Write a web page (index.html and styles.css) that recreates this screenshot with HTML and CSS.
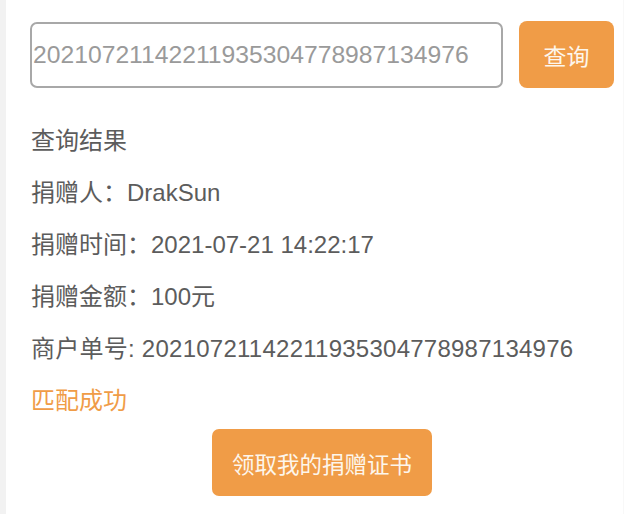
FILE: index.html
```html
<!DOCTYPE html>
<html lang="zh-CN">
<head>
<meta charset="utf-8">
<title>查询结果</title>
<link rel="stylesheet" href="styles.css">
</head>
<body>
<div class="page">
  <div class="strip"></div>
  <main class="content">
    <div class="search-row">
      <input class="search-input" type="text" value="20210721142211935304778987134976" readonly>
      <button class="btn btn-search" type="button">查询</button>
    </div>
    <div class="result">
      <div class="line">查询结果</div>
      <div class="line">捐赠人：DrakSun</div>
      <div class="line">捐赠时间：2021-07-21 14:22:17</div>
      <div class="line">捐赠金额：100元</div>
      <div class="line order">商户单号: 20210721142211935304778987134976</div>
      <div class="line success">匹配成功</div>
    </div>
    <div class="cert-row">
      <button class="btn btn-cert" type="button">领取我的捐赠证书</button>
    </div>
  </main>
</div>
</body>
</html>
```

FILE: styles.css
```css
html, body {
  margin: 0;
  padding: 0;
  background: #ffffff;
}
body {
  font-family: "Liberation Sans", "Noto Sans CJK SC", sans-serif;
  color: #5c5c5c;
}
.page {
  display: flex;
  width: 641px;
  height: 514px;
  overflow: hidden;
}
.strip {
  width: 6px;
  flex: none;
  background: #f2f2f2;
}
.content {
  flex: 1;
  padding: 21px 9px 0 24px;
  margin-right: 17px;
  border-right: 1px solid #f8f8f8;
}
.search-row {
  display: flex;
  align-items: flex-start;
  gap: 16px;
}
.search-input {
  flex: 1;
  min-width: 0;
  box-sizing: border-box;
  height: 66px;
  margin-top: 1px;
  padding: 0 0 0 1px;
  border: 2px solid #a8a8a8;
  border-radius: 7px;
  font-family: "Liberation Sans", "Noto Sans CJK SC", sans-serif;
  font-size: 24.7px;
  color: #9a9a9a;
  background: #fff;
  outline: none;
}
.btn {
  border: none;
  background: #f09c47;
  color: #fdf6ec;
  font-family: "Noto Sans CJK SC", "Liberation Sans", sans-serif;
  cursor: pointer;
  padding: 0;
}
.btn-search {
  width: 95px;
  height: 67px;
  border-radius: 8px;
  font-size: 23px;
  flex: none;
}
.result {
  margin-top: 27px;
  padding-left: 1px;
}
.line {
  height: 52px;
  line-height: 52px;
  font-size: 24px;
  white-space: nowrap;
}
.order {
  letter-spacing: 0.25px;
}
.success {
  color: #f09c47;
}
.cert-row {
  display: flex;
  justify-content: center;
  margin-top: 2px;
}
.btn-cert {
  width: 220px;
  height: 67px;
  border-radius: 7px;
  font-size: 22.5px;
}
```
